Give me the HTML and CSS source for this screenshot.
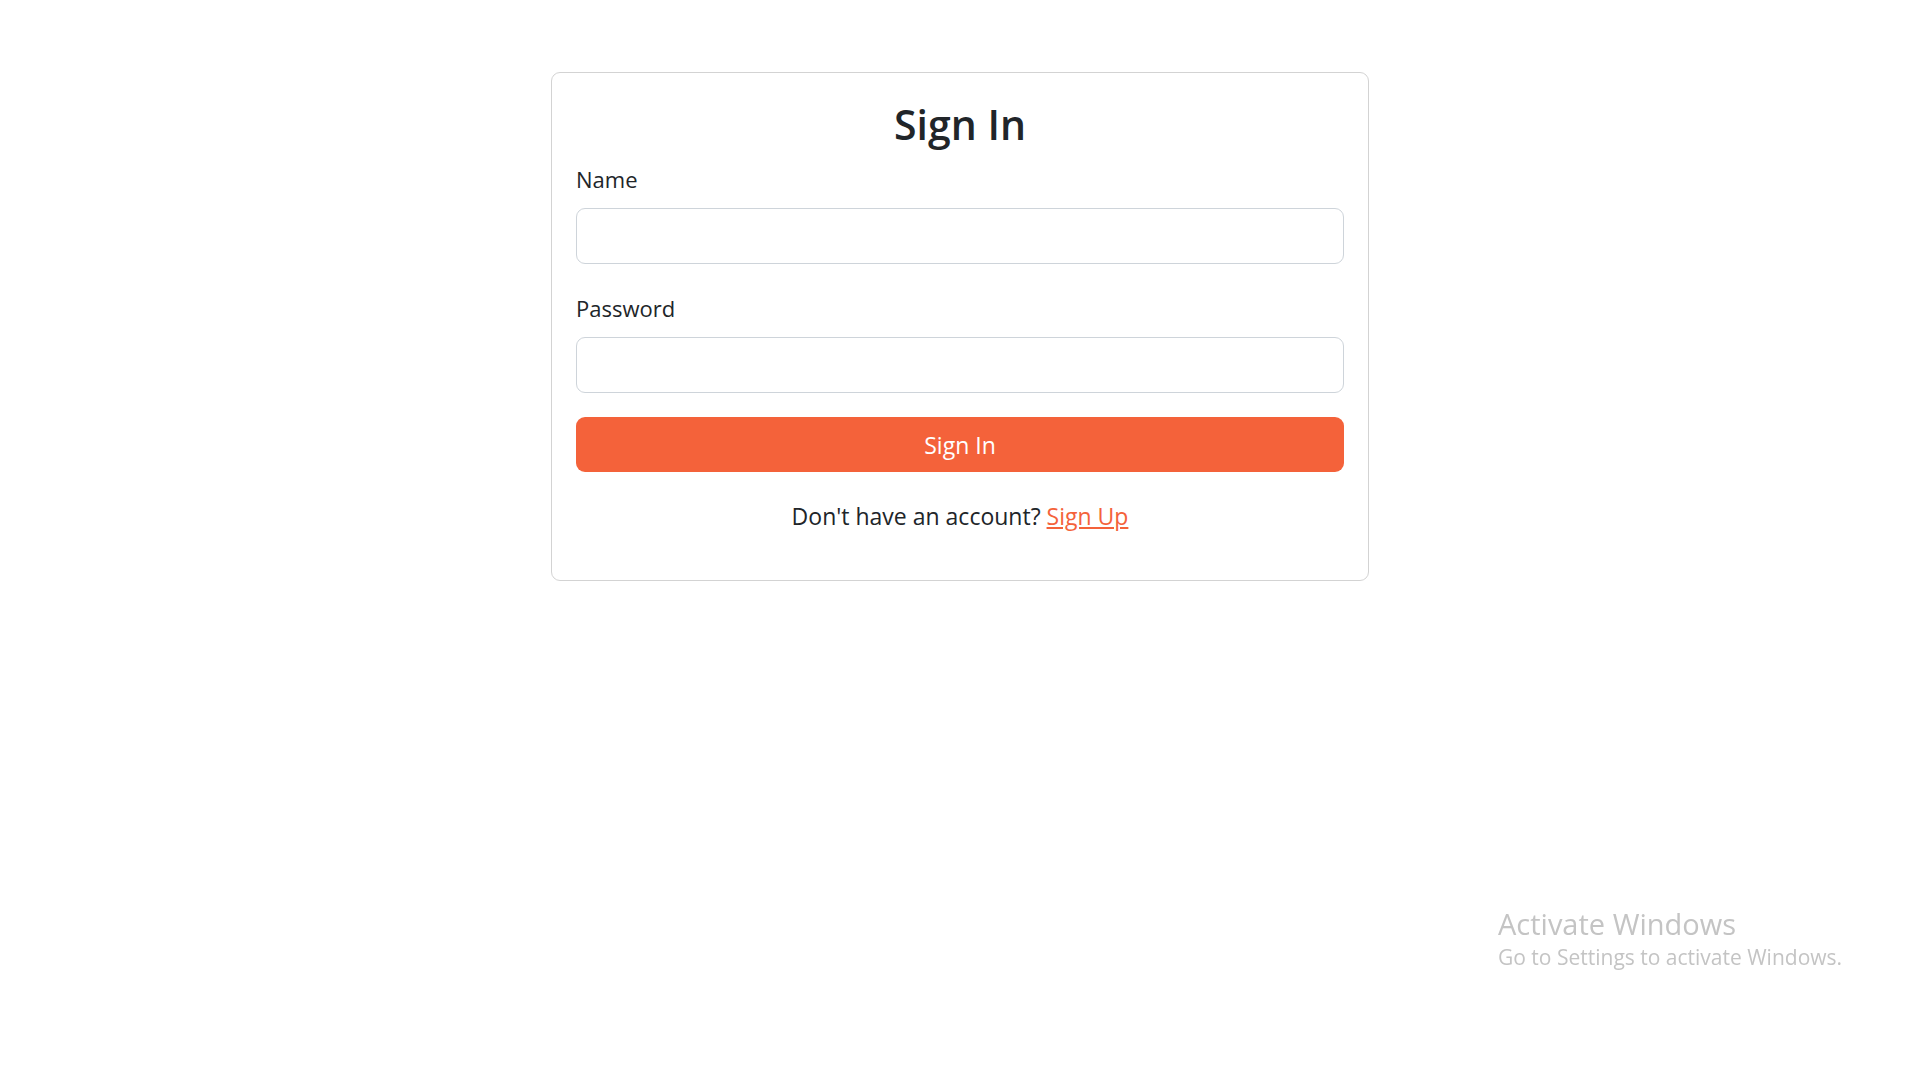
FILE: index.html
```html
<!DOCTYPE html>
<html lang="en">
  <head>
    <meta charset="UTF-8" />
    <meta name="viewport" content="width=device-width, initial-scale=1.0" />
    <title>Sign In</title>
    <link rel="stylesheet" href="styles.css">
  </head>
  <body>
    <div class="page">
      <!-- Sign In Card -->
      <form class="card" id="signInForm" method="POST">
        <h1 class="card-title">Sign In</h1>

        <label class="field-label" for="name">Name</label>
        <input class="field-input" type="text" id="name" name="name" />

        <label class="field-label" for="password">Password</label>
        <input class="field-input" type="password" id="password" name="password" />

        <button class="btn-submit" type="submit">Sign In</button>

        <p class="switch-text">
          Don't have an account? <a class="switch-link" href="#">Sign Up</a>
        </p>
      </form>
    </div>

    <div class="activate">
      <div class="activate-title">Activate Windows</div>
      <div class="activate-sub">Go to Settings to activate Windows.</div>
    </div>
  </body>
</html>
```

FILE: styles.css
```css
* {
  box-sizing: border-box;
}
body {
  margin: 0;
  font-family: "Open Sans", "Noto Sans", sans-serif;
  color: #212529;
  background-color: #fff;
}
.page {
  display: flex;
  justify-content: center;
  padding-top: 72px;
}
.card {
  width: 818px;
  padding: 27px 24px 22px;
  border: 1px solid #d3d3d3;
  border-radius: 9px;
  display: flex;
  flex-direction: column;
}
.card-title {
  margin: 0 0 12px;
  font-size: 41px;
  font-weight: 600;
  line-height: 1.2;
  text-align: center;
}
.field-label {
  font-size: 22px;
  line-height: 36px;
  margin-bottom: 11px;
}
.field-input {
  height: 56px;
  width: 100%;
  padding: 0 18px;
  font-size: 22px;
  border: 1px solid #ced4da;
  border-radius: 9px;
  margin: 0 0 26px;
}
.field-input:last-of-type {
  margin-bottom: 24px;
}
.btn-submit {
  height: 55px;
  width: 100%;
  border: none;
  border-radius: 9px;
  background-color: #f4623a;
  color: #fff;
  font-family: inherit;
  font-size: 23px;
  cursor: pointer;
}
.switch-text {
  margin: 26px 0 24px;
  font-size: 23px;
  line-height: 36px;
  text-align: center;
}
.switch-link {
  color: #f4623a;
}
.activate {
  position: fixed;
  left: 1498px;
  top: 905px;
  color: #c4c4c4;
}
.activate-title {
  font-size: 29px;
  line-height: 38px;
}
.activate-sub {
  font-size: 21px;
  line-height: 28px;
}
```
